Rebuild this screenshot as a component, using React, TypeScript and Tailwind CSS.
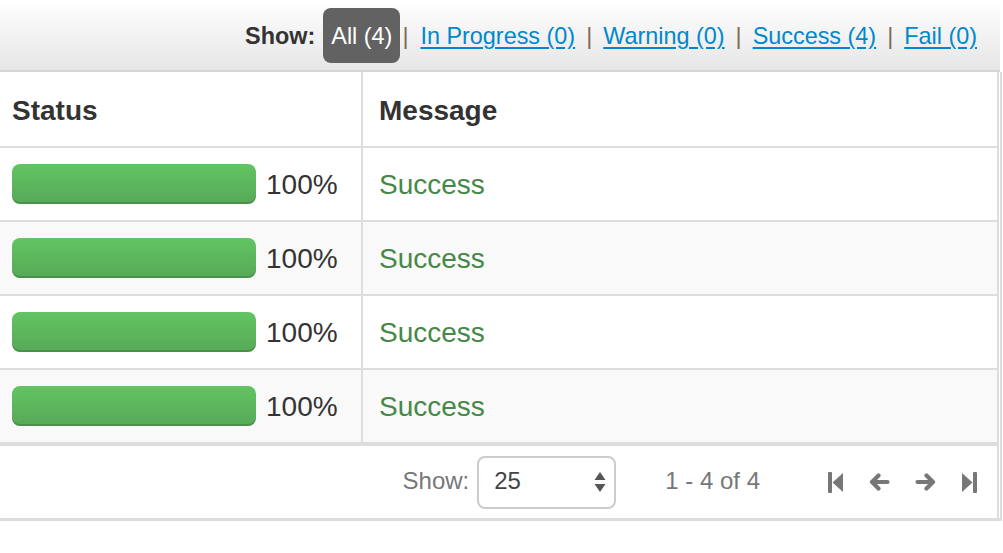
const links = [
  { label: 'In Progress (0)' },
  { label: 'Warning (0)' },
  { label: 'Success (4)' },
  { label: 'Fail (0)' }
]

const rows = [0, 1, 2, 3]

function StepIcon({ dir }: { dir: 'first' | 'last' }) {
  return (
    <svg width="15" height="21" viewBox="0 0 15 21" className={dir === 'last' ? '-scale-x-100' : ''}>
      <rect x="0" y="0" width="4" height="21" rx="1" fill="#777" />
      <path d="M15 1 L15 20 L4.5 10.5 Z" fill="#777" />
    </svg>
  )
}

function ArrowIcon({ dir }: { dir: 'left' | 'right' }) {
  return (
    <svg width="21" height="18" viewBox="0 0 21 18" className={dir === 'right' ? '-scale-x-100' : ''}>
      <path
        d="M3 9 H18.5 M3 9 L9.5 2.5 M3 9 L9.5 15.5"
        stroke="#777"
        strokeWidth="4.2"
        strokeLinecap="round"
        strokeLinejoin="round"
        fill="none"
      />
    </svg>
  )
}

function ProgressBar() {
  return (
    <div className="w-[244px] h-[40px] rounded-[8px] bg-gradient-to-b from-[#62c462] to-[#57a957] shadow-[inset_0_-2px_0_rgba(0,0,0,0.15)]" />
  )
}

export default function App() {
  return (
    <div className="w-[1003px] h-[553px] bg-white text-[#333] font-['Liberation_Sans',Arial,sans-serif]">
      <div className="w-[1002px]">
        {/* filter toolbar */}
        <div className="w-[1000px] h-[72px] border-b-2 border-[#d6d6d6] bg-gradient-to-b from-[#ffffff] to-[#e6e6e6] flex items-center justify-end pr-[23px] text-[23.4px]">
          <span className="font-bold text-[#333] mr-[8px] pt-[3px]">Show:</span>
          <span className="h-[55px] px-[8px] pt-[3px] rounded-[8px] bg-[#626262] text-white flex items-center">All (4)</span>
          {links.map((l, i) => (
            <span key={l.label} className="flex items-center pt-[3px]">
              <span className={`text-[#7a6a5c] ${i === 0 ? 'ml-[2px] mr-[12px]' : 'mx-[11px]'}`}>|</span>
              <a href="#" className="text-[#0088cc] underline underline-offset-[3px]">
                {l.label}
              </a>
            </span>
          ))}
        </div>

        <div className="border-r-2 border-b-[3px] border-[#dddddd]">
          <div className="w-[999px] border-r-2 border-[#dddddd]">
            {/* table */}
            <div className="border-b-[4px] border-[#dddddd]">
              <div className="flex h-[76px] border-b-2 border-[#dddddd] text-[28px] font-bold text-[#333]">
                <div className="w-[363px] border-r-2 border-[#dddddd] pl-[12px] pt-[3px] flex items-center">Status</div>
                <div className="flex-1 pl-[16px] pt-[3px] flex items-center">Message</div>
              </div>
              {rows.map((r) => (
                <div
                  key={r}
                  className={`flex h-[72px] text-[28px] ${r < 3 ? 'border-b-2 border-[#dddddd] h-[74px]' : ''} ${
                    r % 2 === 1 ? 'bg-[#f9f9f9]' : 'bg-white'
                  }`}
                >
                  <div className="w-[363px] border-r-2 border-[#dddddd] pl-[12px] flex items-center gap-[10px]">
                    <ProgressBar />
                    <span className="text-[#333] pt-[1px]">100%</span>
                  </div>
                  <div className="flex-1 pl-[16px] pt-[1px] flex items-center text-[#468847]">Success</div>
                </div>
              ))}
            </div>

            {/* pager */}
            <div className="h-[72px] flex items-center justify-end pr-[20px] text-[24px] text-[#777]">
              <span className="pb-[2px]">Show:</span>
              <div className="ml-[8px] w-[139px] h-[53px] border-2 border-[#cccccc] rounded-[8px] flex items-center justify-between pl-[15px] pr-[8px] text-[#444]">
                <span className="pb-[2px]">25</span>
                <svg width="12" height="22" viewBox="0 0 12 22">
                  <path d="M6 1 L11.5 9 L0.5 9 Z" fill="#555" />
                  <path d="M0.5 13 L11.5 13 L6 21 Z" fill="#555" />
                </svg>
              </div>
              <span className="ml-[49px] pb-[2px]">1 - 4 of 4</span>
              <div className="ml-[68px] flex items-center">
                <StepIcon dir="first" />
                <span className="ml-[26px]">
                  <ArrowIcon dir="left" />
                </span>
                <span className="ml-[25px]">
                  <ArrowIcon dir="right" />
                </span>
                <span className="ml-[26px]">
                  <StepIcon dir="last" />
                </span>
              </div>
            </div>
          </div>
        </div>
      </div>
    </div>
  )
}
